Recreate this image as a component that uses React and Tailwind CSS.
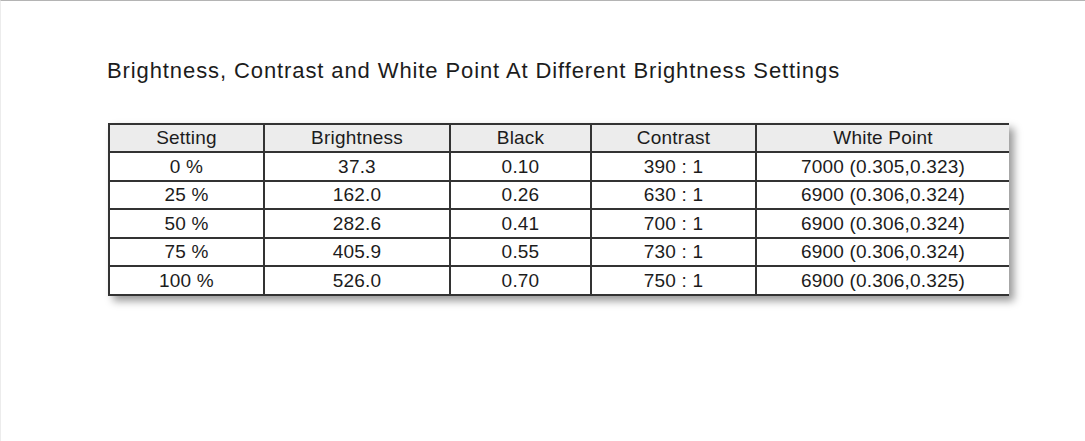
import React from 'react';

const COLS = ['Setting', 'Brightness', 'Black', 'Contrast', 'White Point'];
const WIDTHS = ['w-[155px]', 'w-[186px]', 'w-[141px]', 'w-[165px]', 'w-[253px]'];

const ROWS = [
  ['0 %', '37.3', '0.10', '390 : 1', '7000 (0.305,0.323)'],
  ['25 %', '162.0', '0.26', '630 : 1', '6900 (0.306,0.324)'],
  ['50 %', '282.6', '0.41', '700 : 1', '6900 (0.306,0.324)'],
  ['75 %', '405.9', '0.55', '730 : 1', '6900 (0.306,0.324)'],
  ['100 %', '526.0', '0.70', '750 : 1', '6900 (0.306,0.325)'],
];

const ROW_H = ['h-[29px]', 'h-[28px]', 'h-[29px]', 'h-[28px]', 'h-[29px]'];

export default function App() {
  return (
    <div
      className="w-[1085px] h-[441px] bg-white border-t border-t-[#b4b4b4] border-l border-l-[#ececec] text-[#1c1c1c] overflow-hidden"
      style={{ fontFamily: '"Liberation Sans", Arial, sans-serif' }}
    >
      <div className="pl-[106px] pt-[57px] text-[22px] leading-[25px] tracking-[0.9px]">
        Brightness, Contrast and White Point At Different Brightness Settings
      </div>

      <div className="ml-[107px] mt-[40px] w-[901px] shadow-[5px_5px_8px_rgba(0,0,0,0.4)]">
        <table className="border-collapse text-[19px] leading-[22px] tracking-[0.2px] table-fixed w-full">
          <thead>
            <tr className="h-[28px] bg-[#ececec]">
              {COLS.map((c, i) => (
                <th
                  key={c}
                  className={`${WIDTHS[i]} font-normal text-center p-0 border-2 border-[#333] ${i === 4 ? 'border-r-0' : ''}`}
                >
                  {c}
                </th>
              ))}
            </tr>
          </thead>
          <tbody>
            {ROWS.map((r, ri) => (
              <tr key={ri} className={`${ROW_H[ri]} bg-white`}>
                {r.map((v, i) => (
                  <td
                    key={i}
                    className={`text-center p-0 border-2 border-[#333] ${i === 4 ? 'border-r-0' : ''}`}
                  >
                    {v}
                  </td>
                ))}
              </tr>
            ))}
          </tbody>
        </table>
      </div>
    </div>
  );
}
